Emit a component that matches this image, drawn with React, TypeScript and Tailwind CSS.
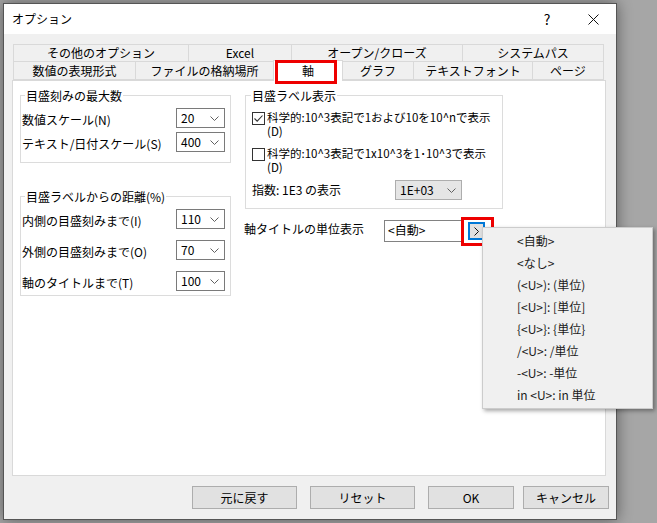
import React from "react";

const Chevron = ({ color = "#606060" }: { color?: string }) => (
  <svg width="9" height="5" viewBox="0 0 9 5" fill="none">
    <path d="M0.5 0.5 L4.5 4.5 L8.5 0.5" stroke={color} strokeWidth="1" />
  </svg>
);

const Combo = ({ value, className }: { value: string; className: string }) => (
  <div
    className={`flex h-[20px] items-center justify-between border pl-[4px] pr-[5px] text-[12px] leading-none ${className}`}
  >
    <span>{value}</span>
    <Chevron />
  </div>
);

const Check = ({ checked }: { checked?: boolean }) => (
  <div className="mt-[2px] flex h-[13px] w-[13px] shrink-0 items-center justify-center border border-[#333] bg-white">
    {checked && (
      <svg width="11" height="11" viewBox="0 0 11 11" fill="none">
        <path d="M1.5 5.5 L4.2 8.2 L9.5 2.5" stroke="#333" strokeWidth="1.1" />
      </svg>
    )}
  </div>
);

const LabelRow = ({ label, value }: { label: string; value: string }) => (
  <div className="flex items-center justify-between">
    <span className="mt-[3px] text-[12px] leading-[14px]">{label}</span>
    <Combo value={value} className="w-[49px] border-[#7a7a7a] bg-white" />
  </div>
);

const tabBase =
  "flex items-center justify-center border border-[#d9d9d9] bg-[#f0f0f0] text-[12px] leading-none -ml-px first:ml-0";

const menuItems = [
  "<自動>",
  "<なし>",
  "(<U>): (単位)",
  "[<U>]: [単位]",
  "{<U>}: {単位}",
  "/<U>: /単位",
  "-<U>: -単位",
  "in <U>: in 単位",
];

export default function App() {
  return (
    <div className="relative h-[523px] w-[657px] overflow-hidden bg-[#a6a6a6] pl-[3px] pt-[3px] font-['Noto_Sans_CJK_JP','Noto_Sans',sans-serif] text-black">
      <div className="flex h-[517px] w-[614px] flex-col border border-[#555] bg-[#f0f0f0] shadow-[0_0_14px_rgba(0,0,0,0.45)]">
        {/* title bar */}
        <div className="flex h-[30px] items-center bg-white pl-[8px]">
          <span className="text-[12px]">オプション</span>
          <div className="ml-auto flex">
            <div className="flex h-[30px] w-[46px] items-center justify-center text-[14px]">?</div>
            <div className="flex h-[30px] w-[46px] items-center justify-center">
              <svg width="11" height="11" viewBox="0 0 11 11">
                <path d="M0.5 0.5 L10.5 10.5 M10.5 0.5 L0.5 10.5" stroke="#111" strokeWidth="1" />
              </svg>
            </div>
          </div>
        </div>

        <div className="pl-[8px] pt-[10px]">
          {/* tabs */}
          <div className="w-[594px]">
            <div className="flex h-[18px] pl-[1px]">
              <div className={`${tabBase} w-[176px]`}>その他のオプション</div>
              <div className={`${tabBase} w-[104px]`}>Excel</div>
              <div className={`${tabBase} w-[172px]`}>オープン/クローズ</div>
              <div className={`${tabBase} w-[142px]`}>システムパス</div>
            </div>
            <div className="-mt-px flex h-[19px] items-end pl-[1px]">
              <div className={`${tabBase} h-[19px] w-[123px]`}>数値の表現形式</div>
              <div className={`${tabBase} h-[19px] w-[139px]`}>ファイルの格納場所</div>
              <div className="relative z-10 -mb-px -ml-px flex h-[21px] w-[70px] items-center justify-center border border-b-0 border-[#d9d9d9] bg-white text-[12px] leading-none">
                軸
                <span className="absolute left-[1px] top-[-1px] h-[24px] w-[62px] border-[3px] border-[#ee0000]" />
              </div>
              <div className={`${tabBase} h-[19px] w-[72px]`}>グラフ</div>
              <div className={`${tabBase} h-[19px] w-[120px]`}>テキストフォント</div>
              <div className={`${tabBase} h-[19px] w-[72px]`}>ページ</div>
            </div>
          </div>

          {/* tab panel */}
          <div className="flex h-[396px] w-[594px] gap-[13px] border border-[#d9d9d9] bg-white pl-[7px] pt-[7px]">
            <div className="w-[211px]">
              <fieldset className="border border-[#dcdcdc]">
                <legend className="ml-[4px] px-[1px] text-[12px] leading-[15px]">目盛刻みの最大数</legend>
                <div className="flex flex-col gap-[4px] pb-[10px] pl-[1px] pr-[5px] pt-[5px]">
                  <LabelRow label="数値スケール(N)" value="20" />
                  <LabelRow label="テキスト/日付スケール(S)" value="400" />
                </div>
              </fieldset>
              <fieldset className="mt-[26px] border border-[#dcdcdc]">
                <legend className="ml-[4px] px-[1px] text-[12px] leading-[15px]">目盛ラベルからの距離(%)</legend>
                <div className="flex flex-col gap-[11px] pb-[4px] pl-[1px] pr-[5px] pt-[5px]">
                  <LabelRow label="内側の目盛刻みまで(I)" value="110" />
                  <LabelRow label="外側の目盛刻みまで(O)" value="70" />
                  <LabelRow label="軸のタイトルまで(T)" value="100" />
                </div>
              </fieldset>
            </div>

            <div className="w-[260px]">
              <fieldset className="ml-[1px] w-[258px] border border-[#dcdcdc]">
                <legend className="ml-[5px] px-[1px] text-[12px] leading-[15px]">目盛ラベル表示</legend>
                <div className="pb-[8px] pl-[6px] pt-[7px]">
                  <div className="flex items-start gap-[2px]">
                    <Check checked />
                    <span className="whitespace-nowrap text-[11.5px] leading-[14px]">
                      科学的:10^3表記で1および10を10^nで表示
                      <br />
                      (D)
                    </span>
                  </div>
                  <div className="mt-[8px] flex items-start gap-[2px]">
                    <Check />
                    <span className="whitespace-nowrap text-[11.5px] leading-[14px]">
                      科学的:10^3表記で1x10^3を1･10^3で表示
                      <br />
                      (D)
                    </span>
                  </div>
                  <div className="mt-[6px] flex items-center">
                    <span className="w-[143px] text-[12px] leading-[14px]">指数: 1E3 の表示</span>
                    <Combo value="1E+03" className="w-[67px] border-[#adadad] bg-[#e5e5e5]" />
                  </div>
                </div>
              </fieldset>

              <div className="mt-[11px] flex items-start">
                <span className="mt-[2px] w-[140px] text-[12px] leading-[14px]">軸タイトルの単位表示</span>
                <div className="h-[22px] w-[79px] border border-[#828282] pl-[3px] pt-[2px] text-[12px] leading-[14px]">
                  &lt;自動&gt;
                </div>
                <div className="relative ml-[5px] mt-[2px]">
                  <div className="flex h-[18px] w-[17px] items-center justify-center border-2 border-[#0078d7] bg-[#e1e1e1]">
                    <svg width="5" height="9" viewBox="0 0 5 9" fill="none">
                      <path d="M0.5 0.5 L4.5 4.5 L0.5 8.5" stroke="#111" strokeWidth="1" />
                    </svg>
                  </div>
                  <span className="absolute left-[-7px] top-[-5px] h-[29px] w-[33px] border-[3px] border-[#ee0000]" />
                </div>
              </div>
            </div>
          </div>

          {/* buttons */}
          <div className="mt-[10px] flex w-[597px] justify-end">
            <button className="h-[23px] w-[105px] border border-[#adadad] bg-[#e1e1e1] text-[12px]">元に戻す</button>
            <button className="ml-[13px] h-[23px] w-[105px] border border-[#adadad] bg-[#e1e1e1] text-[12px]">リセット</button>
            <button className="ml-[13px] h-[23px] w-[86px] border border-[#adadad] bg-[#e1e1e1] text-[12px]">OK</button>
            <button className="ml-[9px] h-[23px] w-[86px] border border-[#adadad] bg-[#e1e1e1] text-[12px]">キャンセル</button>
          </div>
        </div>
      </div>

      {/* popup menu */}
      <div className="absolute left-[482px] top-[227px] w-[171px] border border-[#cccccc] bg-[#f0f0f0] py-[2px] shadow-[2px_2px_4px_rgba(0,0,0,0.35)]">
        {menuItems.map((item) => (
          <div key={item} className="flex h-[22px] items-center pl-[34px] text-[12px] text-[#1a1a1a]">
            {item}
          </div>
        ))}
      </div>
    </div>
  );
}
